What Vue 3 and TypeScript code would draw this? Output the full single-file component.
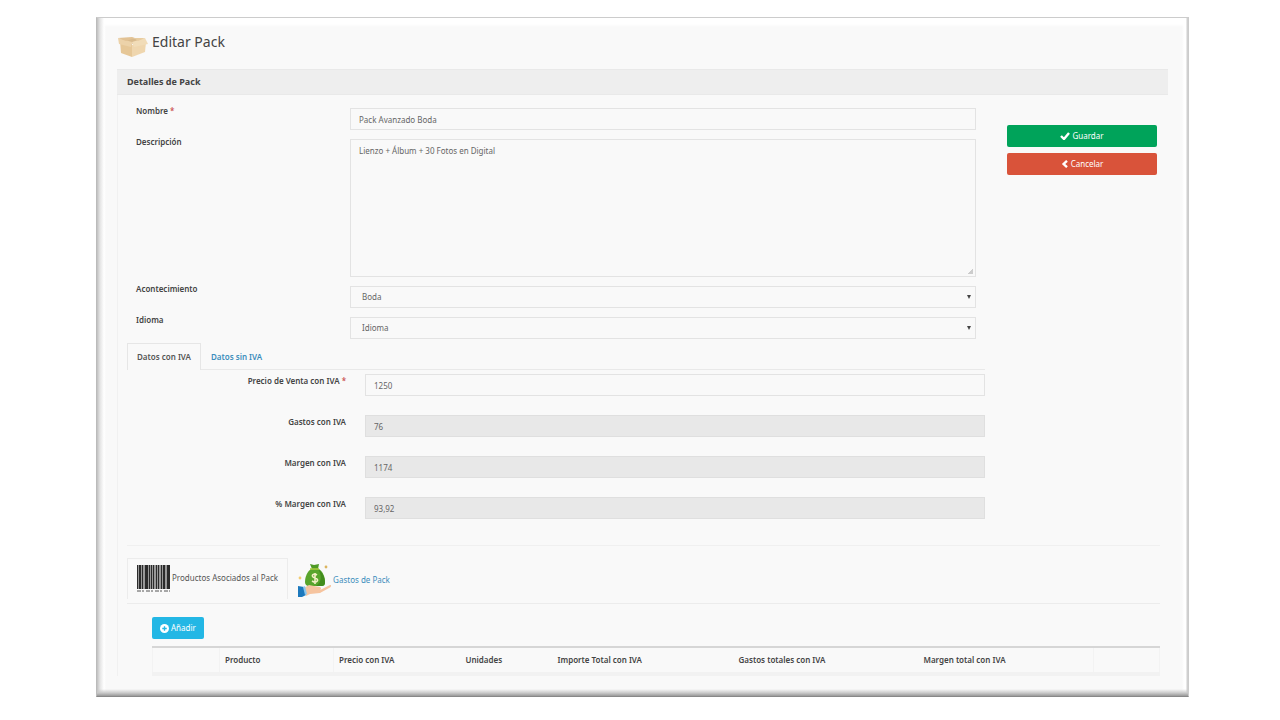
<script setup lang="ts">
import { ref } from 'vue'

interface Amount {
  id: string
  label: string
  required: boolean
  readonly: boolean
  value: string
}

const nombre = ref('Pack Avanzado Boda')
const descripcion = ref('Lienzo + Álbum + 30 Fotos en Digital')
const acontecimiento = ref('Boda')
const idioma = ref('Idioma')

const amounts = ref<Amount[]>([
  { id: 'precio', label: 'Precio de Venta con IVA', required: true, readonly: false, value: '1250' },
  { id: 'gastos', label: 'Gastos con IVA', required: false, readonly: true, value: '76' },
  { id: 'margen', label: 'Margen con IVA', required: false, readonly: true, value: '1174' },
  { id: 'porcentaje', label: '% Margen con IVA', required: false, readonly: true, value: '93,92' },
])

// Bars of the barcode icon: [x, width]
const bars: [number, number][] = [
  [0, 1], [2, 2], [5, 1], [8, 3], [12, 1], [14, 1], [16, 1], [19, 1], [21, 1], [24, 1], [26, 2], [30, 3],
]
</script>

<template>
  <main class="frame">
    <header class="title">
      <svg class="box" viewBox="0 0 32 22" aria-hidden="true">
        <path d="M3 5 15 8v13L4 17z" fill="#e6c797" />
        <path d="M15 9 29 6l-1 10-13 5z" fill="#efd6ae" />
        <path d="M3 3 14 2l14 1-12 5z" fill="#d8ba8d" />
        <path d="M1 2 15 6l-1 5L2 8z" fill="#ecd2a9" />
        <path d="M15 6 28 2l3 6-14 3z" fill="#f1dcb8" />
        <path d="M1 2 15 1l3 1-9 3z" fill="#e2c294" />
        <path d="m17 2 11 0-7 3z" fill="#e8cca0" />
      </svg>
      <h1>Editar Pack</h1>
    </header>

    <section class="panel">
      <h2>Detalles de Pack</h2>
      <div class="body">
        <form class="main" @submit.prevent>
          <div class="fields">
            <label for="nombre">Nombre <span class="req">*</span></label>
            <input id="nombre" v-model="nombre" type="text" class="control" />

            <label for="descripcion">Descripción</label>
            <textarea id="descripcion" v-model="descripcion" class="control area" spellcheck="false"></textarea>

            <label for="acontecimiento">Acontecimiento</label>
            <div class="select">
              <select id="acontecimiento" v-model="acontecimiento" class="control">
                <option>Boda</option>
              </select>
              <svg viewBox="0 0 4 4" aria-hidden="true"><path d="M0 0h4L2 4z" /></svg>
            </div>

            <label for="idioma">Idioma</label>
            <div class="select">
              <select id="idioma" v-model="idioma" class="control">
                <option>Idioma</option>
              </select>
              <svg viewBox="0 0 4 4" aria-hidden="true"><path d="M0 0h4L2 4z" /></svg>
            </div>
          </div>

          <nav class="tabs">
            <a href="#con-iva" class="tab active">Datos con IVA</a>
            <a href="#sin-iva" class="tab">Datos sin IVA</a>
          </nav>

          <div class="amounts">
            <template v-for="a in amounts" :key="a.id">
              <label :for="a.id">{{ a.label }} <span v-if="a.required" class="req">*</span></label>
              <input :id="a.id" v-model="a.value" type="text" class="control" :readonly="a.readonly" />
            </template>
          </div>
        </form>

        <aside class="actions">
          <button type="button" class="btn green">
            <svg viewBox="0 0 10 8" aria-hidden="true"><path d="M1 4 4 7 9 1" fill="none" stroke="#fff" stroke-width="2.4" /></svg>
            Guardar
          </button>
          <button type="button" class="btn red">
            <svg viewBox="0 0 8 8" aria-hidden="true"><path d="M6 0.8 2.6 4 6 7.2" fill="none" stroke="#fff" stroke-width="2.4" /></svg>
            Cancelar
          </button>
        </aside>
      </div>

      <div class="lower">
        <nav class="tabs big">
          <a href="#productos" class="tab active">
            <svg class="barcode" viewBox="0 0 33 27" aria-hidden="true">
              <rect width="33" height="24" fill="#999" />
              <rect v-for="b in bars" :key="b[0]" :x="b[0]" y="0" :width="b[1]" height="24" fill="#2b2b2b" />
              <path d="M0 26h33" stroke="#555" stroke-dasharray="4 1 2 2" />
            </svg>
            <span>Productos Asociados al Pack</span>
          </a>
          <a href="#gastos-pack" class="tab">
            <svg class="money" viewBox="0 0 33 34" aria-hidden="true">
              <path d="m12 1 4 1 5-1-1 5h-6z" fill="#4f9a25" />
              <path d="M13 6h8c4 3 6 8 6 13 0 3-1 4-4 4H11c-3 0-4-2-4-4 0-5 2-10 6-13z" fill="#59a52c" />
              <path d="M20 6c4 3 7 8 7 13 0 3-1 4-4 4h-5c6-4 6-11 2-17z" fill="#428c1d" />
              <path d="M12 6h9" stroke="#a6c93d" stroke-width="1.6" />
              <path d="M19 12c-4-3-7 2-2 3s2 6-3 3M17 10v11" fill="none" stroke="#f4efc5" stroke-width="1.6" />
              <path d="m6 25 5-3 5 1 6 1c2 1 1 3-1 3h-4 5l10-5c2 0 1 2-1 3l-9 5-10 1-4 2z" fill="#f6c49f" />
              <path d="m0 23 6 1 2 8-4 2H0z" fill="#1d79bd" />
              <path d="m5 24 2-1 2 8-2 1z" fill="#8cc8ee" />
              <circle cx="2" cy="15" r="1.4" fill="#f2cc72" />
              <circle cx="28" cy="4" r="1.4" fill="#dbb560" />
            </svg>
            <span>Gastos de Pack</span>
          </a>
        </nav>

        <div class="products">
          <button type="button" class="btn blue">
            <svg viewBox="0 0 8 8" aria-hidden="true">
              <circle cx="4" cy="4" r="4" fill="#fff" />
              <path d="M4 2v4M2 4h4" stroke="#23b7e5" stroke-width="1.2" />
            </svg>
            Añadir
          </button>
          <table>
            <colgroup>
              <col class="c1" /><col class="c2" /><col class="c3" /><col class="c4" />
              <col class="c5" /><col class="c6" /><col class="c7" /><col />
            </colgroup>
            <thead>
              <tr>
                <th></th>
                <th>Producto</th>
                <th>Precio con IVA</th>
                <th>Unidades</th>
                <th>Importe Total con IVA</th>
                <th>Gastos totales con IVA</th>
                <th class="line">Margen total con IVA</th>
                <th></th>
              </tr>
            </thead>
          </table>
        </div>
      </div>
    </section>
  </main>
</template>

<style>
body {
  background: #fff;
}
</style>

<style scoped>
* {
  box-sizing: border-box;
}

.frame {
  margin: 17px 91px 0 96px;
  padding: 15px 20px 20px;
  background:
    linear-gradient(to top, #999, #c8c8c8 3px, rgba(249, 249, 249, 0) 7px),
    linear-gradient(to right, #c0c0c0, #e4e4e4 3px, #fff 7px, rgba(255, 255, 255, 0) 9px),
    linear-gradient(to left, #d0d0d0 1px, #fff 2px, #fff 4px, rgba(255, 255, 255, 0) 6px),
    linear-gradient(to bottom, #fff 6px, #f9f9f9 9px);
  border: 1px solid #bbb;
  border-top-color: #ccc;
  border-right-color: #ccc;
  border-bottom-color: #888;
  font-family: 'Noto Sans', 'Open Sans', sans-serif;
  font-size: 8px;
  line-height: 12px;
  color: #444;
}

.title {
  display: flex;
  gap: 3px;
  height: 36px;
}

.box {
  width: 32px;
  height: 22px;
  margin-top: 3px;
}

h1 {
  margin: 0;
  font-size: 14px;
  line-height: 18px;
  font-weight: 400;
  color: #444;
}

.panel {
  border-left: 1px solid #f1f1f1;
}

h2 {
  margin: 0 0 0 -1px;
  padding: 0 10px;
  font-size: 9px;
  line-height: 24px;
  font-weight: 700;
  color: #444;
  background: #eee;
  border: solid #e9e9e9;
  border-width: 1px 0;
}

.body {
  display: grid;
  grid-template-columns: 1fr 150px;
  gap: 22px;
  padding: 10px 11px 0 9px;
}

label {
  font-weight: 600;
}

.req {
  color: #c55;
}

.fields {
  display: grid;
  grid-template-columns: 214px 1fr;
  row-gap: 6px;
  padding: 0 9px;
}

.fields > .control,
.select {
  margin-top: 3px;
}

.control {
  display: block;
  width: 100%;
  height: 22px;
  margin: 0;
  padding: 0 8px;
  font: inherit;
  color: #666;
  background: #f9f9f9;
  border: 1px solid #e3e3e3;
  border-radius: 0;
  outline: none;
}

.control:read-only:not(select) {
  background: #e8e8e8;
  border-color: #dfdfdf;
}

.area {
  height: 138px;
  padding-top: 5px;
  resize: vertical;
}

.area::-webkit-resizer {
  background: linear-gradient(135deg, transparent 60%, #ccc 60%) 6px 6px / 7px 7px no-repeat;
}

.select {
  position: relative;
}

select.control {
  appearance: none;
  padding: 0 11px;
}

.select svg {
  position: absolute;
  top: 9px;
  right: 5px;
  width: 4px;
  height: 4px;
  fill: #444;
}

.tabs {
  display: flex;
  margin-top: 4px;
  border-bottom: 1px solid #e9e9e9;
}

.tab {
  padding: 0 9px;
  line-height: 25px;
  font-weight: 600;
  color: #3c8dbc;
  text-decoration: none;
  border: 1px solid transparent;
  border-bottom: 0;
}

.tab.active {
  margin-bottom: -1px;
  color: #555;
  background: #f9f9f9;
  border-color: #e6e6e6;
}

.amounts {
  display: grid;
  grid-template-columns: 219px 1fr;
  column-gap: 19px;
  row-gap: 19px;
  margin-top: 4px;
}

.amounts label {
  margin-top: 1px;
  text-align: right;
}

.actions {
  display: flex;
  flex-direction: column;
  gap: 6px;
  padding-top: 20px;
}

.btn {
  display: flex;
  align-items: center;
  justify-content: center;
  gap: 2px;
  height: 22px;
  padding: 0 8px;
  font: inherit;
  color: #fff;
  border: 0;
  border-radius: 2px;
}

.btn svg {
  height: 8px;
}

.green {
  background: #00a35a;
}

.red {
  background: #d9533a;
}

.blue {
  background: #23b7e5;
}

.blue svg {
  height: 9px;
}

.lower {
  margin: 26px 8px 0 9px;
  border-top: 1px solid #f0f0f0;
}

.big {
  margin-top: 12px;
  border-color: #ececec;
}

.big .tab {
  display: flex;
  align-items: center;
  gap: 2px;
  height: 45px;
  padding: 0 9px 2px;
  line-height: 12px;
  font-weight: 400;
}

.big .tab.active {
  height: 41px;
  margin-bottom: 4px;
  border-color: #ececec;
}

.barcode {
  width: 33px;
  height: 27px;
}

.money {
  width: 33px;
  height: 34px;
}

.products {
  padding: 13px 0 0 25px;
}

table {
  width: 100%;
  margin-top: 7px;
  table-layout: fixed;
  border-collapse: collapse;
  border-top: 2px solid #d6d6d6;
  border-bottom: 4px solid #f2f2f2;
}

th {
  height: 27px;
  padding: 0 5px;
  font-weight: 600;
  text-align: left;
  white-space: nowrap;
  border: 0 solid #f3f3f3;
}

th:first-child {
  border-width: 0 1px;
}

th:nth-child(2),
.line,
th:last-child {
  border-right-width: 1px;
}

.c1 { width: 67px; }
.c2 { width: 114px; }
.c3 { width: 127px; }
.c4 { width: 92px; }
.c5 { width: 181px; }
.c6 { width: 185px; }
.c7 { width: 175px; }
</style>
